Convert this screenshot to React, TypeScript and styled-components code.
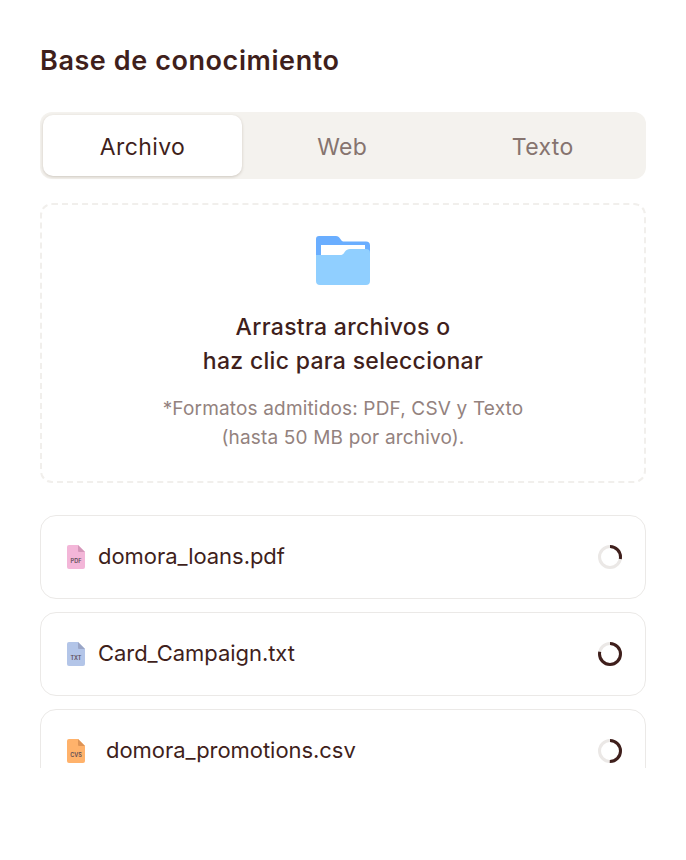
import React from 'react';
import styled, {createGlobalStyle} from "styled-components";

const GlobalStyle = createGlobalStyle`
  html, body {
    margin: 0;
    padding: 0;
    background: #ffffff;
  }
  body {
    font-family: "Inter", "Noto Sans", sans-serif;
    color: #3f1f1c;
  }
`

const files = [
    {name: 'domora_loans.pdf', label: 'PDF', color: '#f3b6d8', fold: '#d497b9', progress: 0.28, indent: 0},
    {name: 'Card_Campaign.txt', label: 'TXT', color: '#b3c5e8', fold: '#9aa5c6', progress: 0.78, indent: 0},
    {name: 'domora_promotions.csv', label: 'CVS', color: '#ffb26b', fold: '#dd9355', progress: 0.5, indent: 8},
]

function FileIcon({label, color, fold}: {label: string, color: string, fold: string}) {
    return (
        <svg width="18" height="24" viewBox="0 0 18 24">
            <path d="M2 0H11L18 7V22a2 2 0 0 1-2 2H2a2 2 0 0 1-2-2V2a2 2 0 0 1 2-2Z" fill={color} />
            <path d="M11 0L18 7H12a1 1 0 0 1-1-1Z" fill={fold} />
            <text x="9" y="18" textAnchor="middle" fontSize="5.5" fontWeight="600" fontFamily="Inter, sans-serif" fill="#5c4a55">{label}</text>
        </svg>
    )
}

function Spinner({progress}: {progress: number}) {
    const radius = 10.5
    const length = 2 * Math.PI * radius
    return (
        <svg width="24" height="24" viewBox="0 0 24 24">
            <circle cx="12" cy="12" r={radius} fill="none" stroke="#ebe8e6" strokeWidth="3" />
            <circle
                cx="12"
                cy="12"
                r={radius}
                fill="none"
                stroke="#3f1f1c"
                strokeWidth="3"
                strokeDasharray={`${length * progress} ${length}`}
                transform="rotate(-90 12 12)"
            />
        </svg>
    )
}

function App() {
    return (
        <>
            <GlobalStyle />
            <Page>
                <Title>Base de conocimiento</Title>
                <Tabs>
                    <Tab $active>Archivo</Tab>
                    <Tab>Web</Tab>
                    <Tab>Texto</Tab>
                </Tabs>
                <DropZone>
                    <svg width="56" height="50" viewBox="0 0 56 50">
                        <path d="M4 1H21C23 1 24 2 25 3.500L26.500 5.500C27 6.300 28 6.500 29 6.500H51a4 4 0 0 1 4 4V30H1V4a3 3 0 0 1 3-3Z" fill="#6aaeff" />
                        <rect x="6" y="10" width="44" height="20" fill="#ffffff" />
                        <path d="M1 20H25C27 20 28 19.500 29 18L30 16.500C31 15 33 14 35 14H51a4 4 0 0 1 4 4V46a4 4 0 0 1-4 4H5a4 4 0 0 1-4-4Z" fill="#90cfff" />
                    </svg>
                    <DropTitle>Arrastra archivos o<br />haz clic para seleccionar</DropTitle>
                    <DropHint>*Formatos admitidos: PDF, CSV y Texto<br />(hasta 50 MB por archivo).</DropHint>
                </DropZone>
                <FileList>
                    {files.map(file => (
                        <FileCard key={file.name}>
                            <FileIcon label={file.label} color={file.color} fold={file.fold} />
                            <FileName $indent={file.indent}>{file.name}</FileName>
                            <Spinner progress={file.progress} />
                        </FileCard>
                    ))}
                </FileList>
            </Page>
        </>
    );
}

const Page = styled.div`
  box-sizing: border-box;
  width: 686px;
  height: 860px;
  padding: 44px 40px 0;
  display: flex;
  flex-direction: column;
`

const Title = styled.h1`
  margin: 0;
  font-size: 27px;
  line-height: 34px;
  font-weight: 600;
  letter-spacing: 0.58px;
  color: #3f1f1c;
`

const Tabs = styled.div`
  margin-top: 34px;
  height: 67px;
  box-sizing: border-box;
  padding: 3px;
  display: grid;
  grid-template-columns: 199px 1fr 1fr;
  background: #f4f2ee;
  border-radius: 12px;
`

const Tab = styled.div<{ $active?: boolean }>`
  display: flex;
  align-items: center;
  justify-content: center;
  padding-top: 2px;
  font-size: 23px;
  font-weight: 400;
  letter-spacing: 0.4px;
  border-radius: 10px;
  color: ${props => props.$active ? '#3f1f1c' : '#86746f'};
  background: ${props => props.$active ? '#ffffff' : 'transparent'};
  box-shadow: ${props => props.$active ? '0 1px 3px rgba(90, 70, 50, 0.25)' : 'none'};
`

const DropZone = styled.div`
  margin-top: 24px;
  height: 280px;
  box-sizing: border-box;
  padding-top: 30px;
  display: flex;
  flex-direction: column;
  align-items: center;
  border: 2px dashed #f1efec;
  border-radius: 12px;
`

const DropTitle = styled.div`
  margin-top: 25px;
  font-size: 23px;
  line-height: 34px;
  font-weight: 500;
  letter-spacing: 0.3px;
  text-align: center;
  color: #3f1f1c;
`

const DropHint = styled.div`
  margin-top: 16px;
  font-size: 19px;
  line-height: 29px;
  letter-spacing: 0.17px;
  text-align: center;
  color: #93827e;
`

const FileList = styled.div`
  margin-top: 32px;
  height: 253px;
  overflow: hidden;
  display: flex;
  flex-direction: column;
  gap: 13px;
`

const FileCard = styled.div`
  flex: none;
  height: 84px;
  box-sizing: border-box;
  padding: 0 23px 0 26px;
  display: flex;
  align-items: center;
  border: 1.5px solid #ebe9e7;
  border-radius: 16px;
`

const FileName = styled.div<{ $indent: number }>`
  flex: 1;
  margin-left: ${props => 13 + props.$indent}px;
  padding-bottom: 2px;
  font-size: 22px;
  letter-spacing: -0.05px;
  color: #3f1f1c;
`

export default App;
